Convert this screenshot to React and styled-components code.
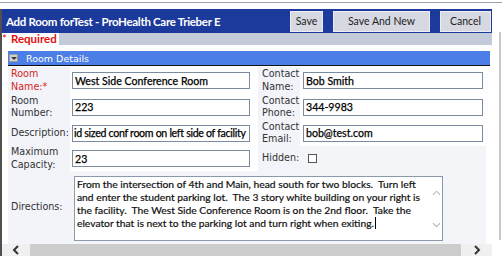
import React from "react";
import styled, { createGlobalStyle } from "styled-components";

const GlobalStyle = createGlobalStyle`
  html, body {
    margin: 0;
    padding: 0;
    background: #fff;
  }
  body {
    width: 502px;
    height: 256px;
    overflow: hidden;
    font-family: Lato, "Liberation Sans", sans-serif;
  }
  * {
    box-sizing: border-box;
  }
`;

const Frame = styled.div`
  display: flex;
  flex-direction: column;
  width: 502px;
  height: 256px;
  padding-top: 2px;
  overflow: hidden;
`;

const TopRule = styled.div`
  flex-shrink: 0;
  height: 1px;
  margin-bottom: 6px;
  background: #9aa3b2;
`;

const Window = styled.div`
  flex: 1;
  display: flex;
  min-height: 0;
  border-left: 2px solid #505050;
`;

const Main = styled.div`
  display: flex;
  flex-direction: column;
  width: 490px;
`;

const Gutter = styled.div`
  flex: 1;
  display: flex;
  justify-content: flex-end;
  padding: 23px 1px 16px 0;
`;

const GutterThumb = styled.div`
  width: 2px;
  background: #c9c9c9;
`;

const Header = styled.div`
  display: flex;
  align-items: center;
  height: 24px;
  padding: 0 1px 0 4px;
  background: #1c3a9b;
`;

const Title = styled.div`
  flex: 1;
  overflow: hidden;
  white-space: nowrap;
  color: #fff;
  font: 700 11.5px Lato, sans-serif;
  letter-spacing: -0.3px;
`;

const ButtonBar = styled.div`
  display: flex;
  gap: 10px;
`;

const Button = styled.button`
  width: ${(p) => p.$width}px;
  height: 21px;
  padding: 0;
  border: 1px solid #eceef3;
  background: #d6d9e2;
  color: #222;
  font: 400 10.5px Lato, sans-serif;
`;

const RequiredBar = styled.div`
  display: flex;
  height: 12px;
  background: #c3cbd9;
`;

const RequiredText = styled.div`
  padding-right: 2px;
  background: #fff;
  color: #e01010;
  font: 700 11.5px/12px Lato, sans-serif;
`;

const Star = styled.span`
  margin-right: 4px;
  font-weight: 400;
`;

const Body = styled.div`
  flex: 1;
  min-height: 0;
  padding: 6px 2px 0 6px;
`;

const SectionBar = styled.div`
  display: flex;
  align-items: center;
  height: 15px;
  padding-left: 1px;
  background: #4b7ee6;
  border-bottom: 1px solid #111;
`;

const Toggle = styled.span`
  display: flex;
  align-items: center;
  justify-content: center;
  width: 9px;
  height: 8px;
  background: #d2d2d2;
  border: 1px solid #9a9a9a;

  &::after {
    content: "";
    border-left: 3px solid transparent;
    border-right: 3px solid transparent;
    border-top: 3px solid #333;
  }
`;

const SectionTitle = styled.span`
  margin-left: 8px;
  color: #fff;
  font: 400 9.5px "DejaVu Sans", sans-serif;
`;

const FormGrid = styled.div`
  display: grid;
  grid-template-columns: 62px 188px 42px 186px;
  grid-template-rows: 27px 26px 26px 25px 73px;
  width: 478px;
  margin-top: 1px;
`;

const LabelCell = styled.div`
  display: flex;
  align-items: center;
  padding-left: ${(p) => p.$pad || 3}px;
  background: #f2f4fa;
  color: ${(p) => (p.$required ? "#d42424" : "#333")};
  font: 400 9.6px/12.5px "DejaVu Sans", sans-serif;
`;

const ValueCell = styled.div`
  display: flex;
  align-items: center;
  padding-left: ${(p) => p.$pad}px;
  background: ${(p) => (p.$tint ? "#f4f5f8" : "#fff")};
`;

const TextInput = styled.input`
  width: ${(p) => p.$width}px;
  height: 17px;
  padding: 0 0 0 ${(p) => (p.$tight ? 1 : 2)}px;
  border: 1px solid #7a8ba0;
  background: #fff;
  color: #000;
  font: 400 10.6px Lato, sans-serif;
  letter-spacing: ${(p) => (p.$tight ? "-0.3px" : "0")};
  -webkit-text-stroke: 0.25px #000;
  outline: none;
`;

const CheckBox = styled.span`
  width: 9px;
  height: 9px;
  margin-left: 8px;
  border: 1px solid #555;
  background: #fff;
`;

const DirectionsCell = styled.div`
  grid-column: 2 / 5;
  padding: 5px 0 2px 4px;
  background: #f4f5f8;
`;

const TextBox = styled.div`
  display: flex;
  width: 369px;
  height: 65px;
  border: 1px solid #8a9aaa;
  background: #fff;
`;

const TextBody = styled.div`
  flex: 1;
  padding: 1px 0 0 2px;
  color: #111;
  font: 400 10.3px/13px Lato, sans-serif;
  -webkit-text-stroke: 0.2px #111;
`;

const TextLine = styled.div`
  white-space: pre;
`;

const Caret = styled.span`
  display: inline-block;
  width: 1px;
  height: 12px;
  margin-left: 1px;
  vertical-align: -2px;
  background: #000;
`;

const ScrollColumn = styled.div`
  display: flex;
  flex-direction: column;
  justify-content: space-between;
  align-items: center;
  width: 12px;
  padding: 12px 0 12px;
`;

const HScroll = styled.div`
  display: flex;
  height: 12px;
  background: #f0f0f0;
`;

const ScrollButton = styled.div`
  display: flex;
  align-items: center;
  justify-content: center;
  width: ${(p) => p.$width}px;
`;

const ScrollThumb = styled.div`
  width: 431px;
  background: #cdcdcd;
`;

const Chevron = ({ dir, color = "#333", size = 10, weight = 2 }) => {
  const pts = {
    left: "6,1 2,5 6,9",
    right: "2,1 6,5 2,9",
    up: "1,6 5,2 9,6",
    down: "1,3 5,7 9,3",
  }[dir];
  const vertical = dir === "up" || dir === "down";
  return (
    <svg
      width={vertical ? size : 8}
      height={vertical ? 8 : size}
      viewBox={vertical ? "0 0 10 8" : "0 0 8 10"}
    >
      <polyline points={pts} fill="none" stroke={color} strokeWidth={weight} />
    </svg>
  );
};

const directions = [
  "From the intersection of 4th and Main, head south for two blocks.  Turn left",
  "and enter the student parking lot.  The 3 story white building on your right is",
  "the facility.  The West Side Conference Room is on the 2nd floor.  Take the",
  "elevator that is next to the parking lot and turn right when exiting.",
];

const App = () => {
  return (
    <Frame>
      <GlobalStyle />
      <TopRule />
      <Window>
        <Main>
          <Header>
            <Title>Add Room forTest - ProHealth Care Trieber E</Title>
            <ButtonBar>
              <Button $width={33}>Save</Button>
              <Button $width={97}>Save And New</Button>
              <Button $width={51}>Cancel</Button>
            </ButtonBar>
          </Header>
          <RequiredBar>
            <RequiredText>
              <Star>*</Star>Required
            </RequiredText>
          </RequiredBar>
          <Body>
            <SectionBar>
              <Toggle />
              <SectionTitle>Room Details</SectionTitle>
            </SectionBar>
            <FormGrid>
              <LabelCell $required>
                Room
                <br />
                Name:*
              </LabelCell>
              <ValueCell $pad={2}>
                <TextInput $width={178} readOnly value="West Side Conference Room" />
              </ValueCell>
              <LabelCell $pad={4}>
                Contact
                <br />
                Name:
              </LabelCell>
              <ValueCell $pad={3}>
                <TextInput $width={180} readOnly value="Bob Smith" />
              </ValueCell>

              <LabelCell>
                Room
                <br />
                Number:
              </LabelCell>
              <ValueCell $pad={2}>
                <TextInput $width={178} readOnly value="223" />
              </ValueCell>
              <LabelCell $pad={4}>
                Contact
                <br />
                Phone:
              </LabelCell>
              <ValueCell $pad={3}>
                <TextInput $width={180} readOnly value="344-9983" />
              </ValueCell>

              <LabelCell>Description:</LabelCell>
              <ValueCell $pad={2}>
                <TextInput
                  $width={178}
                  $tight
                  readOnly
                  value="id sized conf room on left side of facility"
                />
              </ValueCell>
              <LabelCell $pad={4}>
                Contact
                <br />
                Email:
              </LabelCell>
              <ValueCell $pad={3}>
                <TextInput $width={180} readOnly value="bob@test.com" />
              </ValueCell>

              <LabelCell>
                Maximum
                <br />
                Capacity:
              </LabelCell>
              <ValueCell $pad={2}>
                <TextInput $width={178} readOnly value="23" />
              </ValueCell>
              <LabelCell $pad={4}>Hidden:</LabelCell>
              <ValueCell $pad={0} $tint>
                <CheckBox />
              </ValueCell>

              <LabelCell>Directions:</LabelCell>
              <DirectionsCell>
                <TextBox>
                  <TextBody>
                    {directions.map((line, i) => (
                      <TextLine key={i}>
                        {line}
                        {i === directions.length - 1 && <Caret />}
                      </TextLine>
                    ))}
                  </TextBody>
                  <ScrollColumn>
                    <Chevron dir="up" color="#b8b8b8" size={9} weight={1.2} />
                    <Chevron dir="down" color="#b8b8b8" size={9} weight={1.2} />
                  </ScrollColumn>
                </TextBox>
              </DirectionsCell>
            </FormGrid>
          </Body>
          <HScroll>
            <ScrollButton $width={28}>
              <Chevron dir="left" />
            </ScrollButton>
            <ScrollThumb />
            <ScrollButton $width={31}>
              <Chevron dir="right" />
            </ScrollButton>
          </HScroll>
        </Main>
        <Gutter>
          <GutterThumb />
        </Gutter>
      </Window>
    </Frame>
  );
};

export default App;
